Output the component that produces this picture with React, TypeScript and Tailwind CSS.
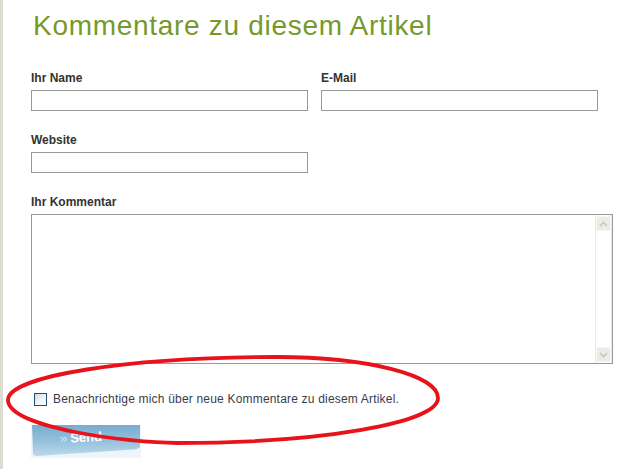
import React from "react";

export default function App() {
  return (
    <div className="relative w-[635px] h-[469px] overflow-hidden bg-white" style={{ fontFamily: '"Liberation Sans", Arial, sans-serif' }}>
      <div className="absolute left-0 top-0 h-full w-[3px] bg-[#dcdcd2]" />
      <div className="pl-[31px] pt-[9px]">
        <h1 className="text-[28px] leading-[34px] text-[#76992a] pl-[2px] tracking-[0.7px]">Kommentare zu diesem Artikel</h1>
        <div className="mt-[28px] flex gap-[13px]">
          <div className="flex flex-col">
            <label className="text-[12px] font-bold text-[#333] leading-[14px]">Ihr Name</label>
            <input className="mt-[5px] w-[277px] h-[21px] border border-[#999] outline-none" />
          </div>
          <div className="flex flex-col">
            <label className="text-[12px] font-bold text-[#333] leading-[14px]">E-Mail</label>
            <input className="mt-[5px] w-[277px] h-[21px] border border-[#999] outline-none" />
          </div>
        </div>
        <div className="mt-[22px] flex flex-col">
          <label className="text-[12px] font-bold text-[#333] leading-[14px]">Website</label>
          <input className="mt-[5px] w-[277px] h-[21px] border border-[#999] outline-none" />
        </div>
        <div className="mt-[22px] flex flex-col">
          <label className="text-[12px] font-bold text-[#333] leading-[14px]">Ihr Kommentar</label>
          <div className="mt-[5px] w-[582px] h-[150px] border border-[#999] flex justify-end">
            <div className="w-[17px] h-full border-l border-r border-[#ececE6] flex flex-col justify-between py-[1px]">
              <div className="h-[15px] w-[15px] bg-[#ecece6] border border-[#f6f6f2] flex items-center justify-center">
                <svg width="9" height="6" viewBox="0 0 9 6"><path d="M1 5 L4.5 1.5 L8 5" stroke="#c8c8c0" strokeWidth="1.6" fill="none" /></svg>
              </div>
              <div className="h-[15px] w-[15px] bg-[#ecece6] border border-[#f6f6f2] flex items-center justify-center">
                <svg width="9" height="6" viewBox="0 0 9 6"><path d="M1 1 L4.5 4.5 L8 1" stroke="#c8c8c0" strokeWidth="1.6" fill="none" /></svg>
              </div>
            </div>
          </div>
        </div>
        <div className="mt-[28px] flex items-center pl-[3px]">
          <div className="w-[13px] h-[13px] border border-[#1d4f7e] bg-gradient-to-br from-[#d4d4d0] via-[#f2f2f0] to-white" />
          <span className="ml-[6px] text-[12px] text-[#3b3b4b] leading-[14px] tracking-[0.19px]">Benachrichtige mich über neue Kommentare zu diesem Artikel.</span>
        </div>
        <div className="mt-[19px] w-[110px] h-[33px] bg-[#eef5f8] relative overflow-hidden">
          <div className="absolute left-[1px] top-0 w-[108px] h-[31px] bg-gradient-to-b from-[#78acd0] via-[#94c0dc] to-[#bcd9ea] [clip-path:polygon(0_0,100%_0,100%_72%,97%_78%,4%_100%,1%_96%)]" />
          <span className="absolute left-[29px] top-[6px] text-[13px] font-bold text-white leading-[15px] -rotate-[3deg] origin-left">
            <span className="text-[#d6e8f3] font-normal mr-[3px]">»</span>Send
          </span>
        </div>
      </div>
      <svg className="absolute left-0 top-0 pointer-events-none" width="635" height="469">
        <path
          d="M8 400 C8 376 129 357 277 357 C366 357 438 375 438 398 C438 423 321 443 177 443 C130 443 8 428 8 400 Z"
          fill="none"
          stroke="#e8121b"
          strokeWidth="3.8"
        />
      </svg>
    </div>
  );
}
